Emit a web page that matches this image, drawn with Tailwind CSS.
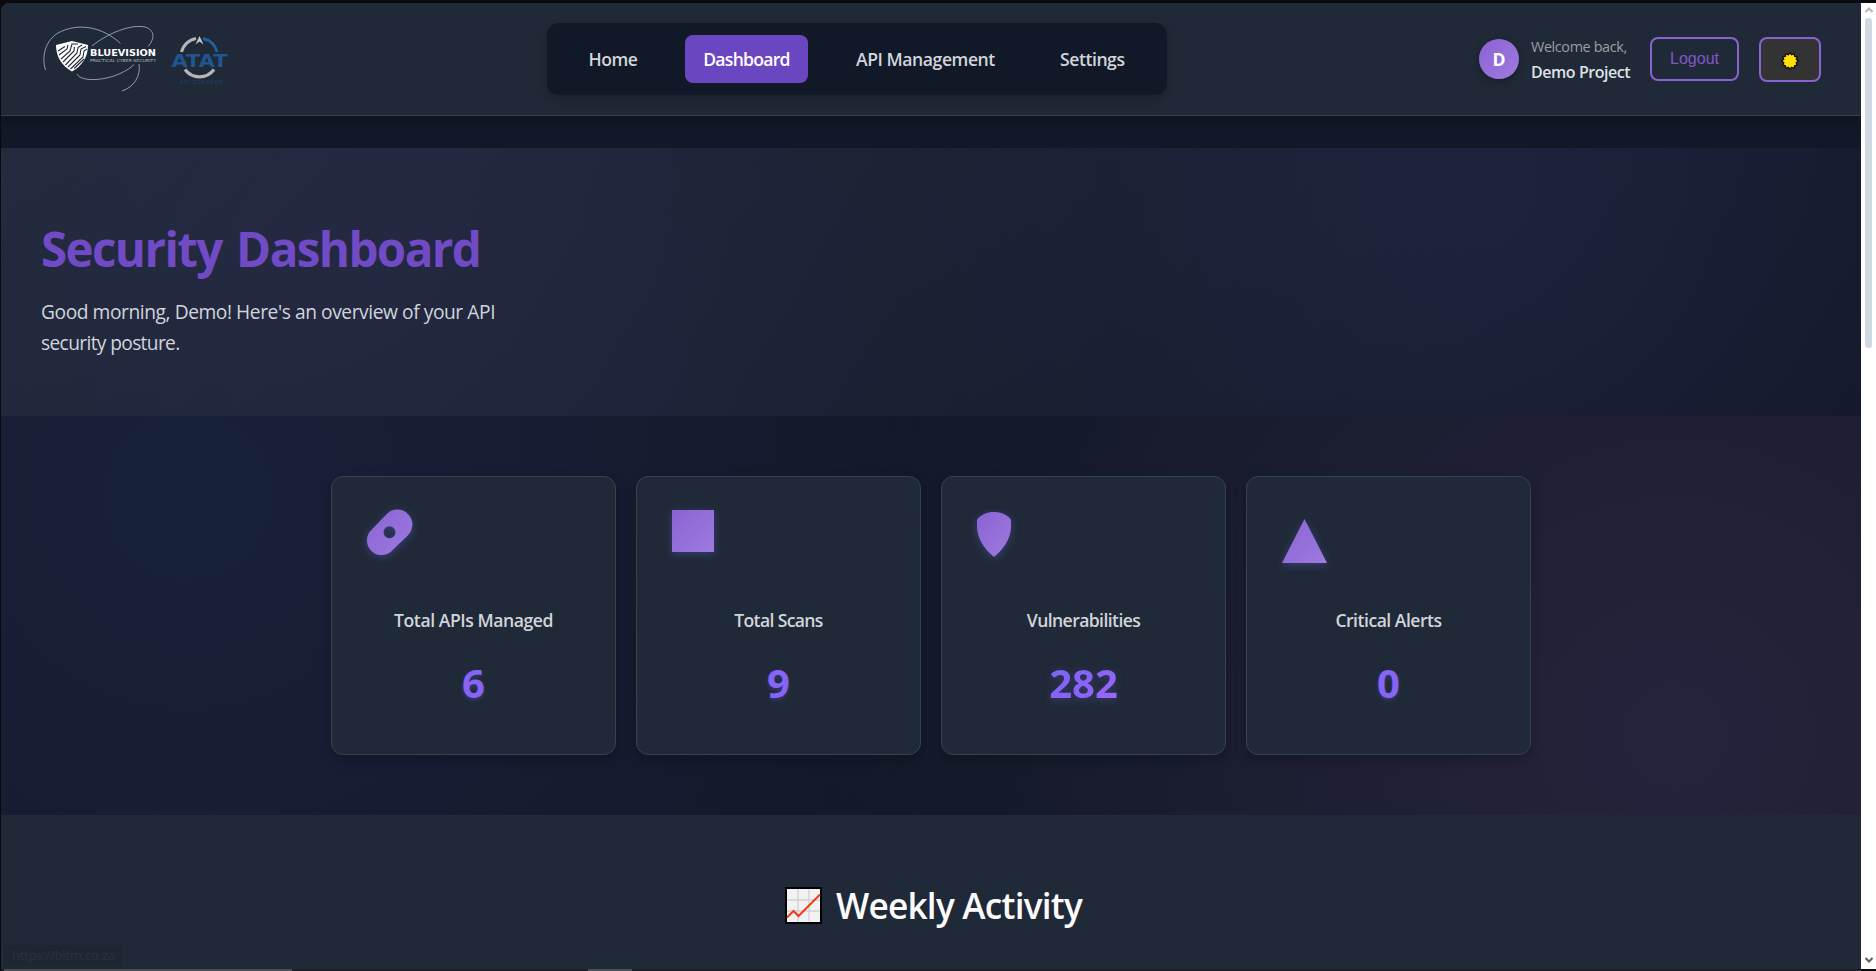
<!DOCTYPE html>
<html lang="en">
<head>
<meta charset="utf-8">
<title>Security Dashboard</title>
<script src="https://cdn.jsdelivr.net/npm/@tailwindcss/browser@4"></script>
</head>
<body class="h-[971px] w-[1876px] overflow-hidden bg-[#0a0a0c] font-['Open_Sans','Noto_Sans',sans-serif]">
<svg width="0" height="0" class="absolute"><defs>
  <linearGradient id="pg" x1="0" y1="0" x2="1" y2="1"><stop offset="0" stop-color="#8a63d2"/><stop offset="1" stop-color="#9f7ae0"/></linearGradient>
</defs></svg>
<div class="flex h-[971px] pt-[3px] pl-px">
  <div class="flex w-[1860px] flex-col overflow-hidden rounded-tl-lg bg-[#111827]">
    <!-- Header -->
    <header class="z-10 flex h-[113px] shrink-0 border-b border-[#374151] bg-[#202937] shadow-[0_4px_12px_rgba(0,0,0,0.25)]">
      <div class="flex w-[546px] pt-[18px] pl-[36px]">
        <svg width="200" height="80" viewBox="37 21 200 80" fill="none">
          <g stroke="#9aa8b8" stroke-width="0.9">
            <path d="M45.500 70C41 56 46 40 58 33C78 22 103 27 120.500 43.500"/>
            <path d="M92 46C108 33 131 24 145 27C155 30 155 39 148 46.500"/>
            <path d="M77 74C81 82 104 81 120 73.500C126 71 131 67.500 134 64.500"/>
            <path d="M139 64C141 76 134 87 122 91"/>
          </g>
          <path d="M56 45L72 41L88 45C88 57 82 66 72 71.500C62 66 56 57 56 45Z" fill="#fff"/>
          <g stroke="#202937" stroke-width="1.100">
            <path d="M58 51L65 46.500M59 55L67 49L68 45M61 59L70 51L72 44L78 44M63 62L74 51L74.500 47M65.500 65L77 53L78 47.500L82 45M68 67L80 55L81 49L86 46.500M70.500 69L83 57L84 51L87 49M74 68.500L84 59"/>
          </g>
          <text x="90" y="56" fill="#fff" font-family="DejaVu Sans, sans-serif" font-weight="700" font-size="9.200" textLength="66" lengthAdjust="spacingAndGlyphs">BLUEVISION</text>
          <text x="90" y="62" fill="#b4bcc6" font-family="DejaVu Sans, sans-serif" font-size="4" textLength="66" lengthAdjust="spacingAndGlyphs">PRACTICAL CYBER SECURITY</text>
          <path d="M181.500 52A18 18 0 0 1 196 38.500" stroke="#b4b7ba" stroke-width="3"/>
          <path d="M203 38.500A18 18 0 0 1 217 52" stroke="#20609f" stroke-width="3"/>
          <path d="M185 69.500A18 18 0 0 0 214 69.500" stroke="#b4b7ba" stroke-width="3.200"/>
          <path d="M199.500 36L203.500 44.500L199.500 41.500L195.500 44.500Z" fill="#c4c6c8"/>
          <text x="171.500" y="67.300" fill="#1f568f" font-family="DejaVu Sans, sans-serif" font-weight="700" font-size="18.500" textLength="56" lengthAdjust="spacingAndGlyphs">ATAT</text>
          <text x="180" y="84" fill="#1b436f" font-family="Liberation Sans, sans-serif" font-size="4.600" textLength="42">API SCANNER</text>
        </svg>
      </div>
      <nav class="mt-5 flex h-[72px] w-[620px] items-center rounded-xl bg-[#111827] text-[17.6px] font-semibold text-[#d1d5db] shadow-[0_4px_12px_rgba(0,0,0,0.2)]">
        <a class="ml-[41.5px] w-[96.5px] tracking-[-0.5px]">Home</a>
        <a class="flex h-12 w-[123px] items-center justify-center rounded-lg bg-[#6b46c1] tracking-[-0.75px] text-white">Dashboard</a>
        <a class="ml-[48px] w-[204px] tracking-[-0.45px] whitespace-nowrap">API Management</a>
        <a class="tracking-[-0.45px]">Settings</a>
      </nav>
      <div class="ml-[312px] flex">
        <div class="mt-9 flex size-10 items-center justify-center rounded-full bg-linear-135 from-[#8a63d2] to-[#9f7ae0] text-[17.6px] font-bold text-white shadow-[0_2px_8px_rgba(0,0,0,0.3)]">D</div>
        <div class="mt-[32px] ml-3 w-[119px] whitespace-nowrap">
          <div class="h-[25px] text-[14.4px] leading-[24px] tracking-[-0.38px] text-[#9b9ea3]">Welcome back,</div>
          <div class="text-base leading-[24px] font-semibold tracking-[-0.45px] text-[#dfe1e4]">Demo Project</div>
        </div>
        <button class="mt-[34px] h-11 w-[89px] rounded-lg border-2 border-[#8a63d2] font-['Liberation_Sans',sans-serif] text-base text-[#8058c8]">Logout</button>
        <button class="mt-[34px] ml-5 flex h-[45px] w-[62px] items-center justify-center rounded-lg border-2 border-[#8a63d2] bg-[#333]">
          <svg class="mt-0.5" width="20" height="20" viewBox="-9.500 -9.500 19 19"><path fill="#ffe000" stroke="#0b0b0b" stroke-width="1.200" stroke-linejoin="round" d="M0 -8L1.600 -5.900L4 -6.900L4.400 -4.400L6.900 -4L5.900 -1.600L8 0L5.900 1.600L6.900 4L4.400 4.400L4 6.900L1.600 5.900L0 8L-1.600 5.900L-4 6.900L-4.400 4.400L-6.900 4L-5.900 1.600L-8 0L-5.900 -1.600L-6.900 -4L-4.400 -4.400L-4 -6.900L-1.600 -5.900Z"/></svg>
        </button>
      </div>
    </header>
    <!-- Hero -->
    <section class="mt-8 h-[268px] shrink-0 bg-[radial-gradient(circle_at_20%_50%,rgba(107,70,193,0.1),transparent_50%),radial-gradient(circle_at_80%_20%,rgba(107,70,193,0.12),transparent_40%),linear-gradient(135deg,#1f2937_0%,#111827_100%)] pt-[67px] pl-10">
      <h1 class="text-[47.5px] leading-[68px] font-bold tracking-[-1.6px] [word-spacing:3.6px] whitespace-nowrap text-[#704bc5]">Security Dashboard</h1>
      <p class="mt-[14px] text-[19.2px] leading-[30.7px] tracking-[-0.43px] whitespace-nowrap text-[#d1d5db]">Good morning, Demo! Here's an overview of your API<br><span class="tracking-[-0.65px]">security posture.</span></p>
    </section>
    <!-- Statistics -->
    <section class="flex h-[399px] shrink-0 justify-center gap-5 bg-[#111827] bg-[radial-gradient(circle_at_10%_20%,rgba(90,115,235,0.1),transparent_50%),radial-gradient(circle_at_90%_80%,rgba(159,100,180,0.15),transparent_50%)] pt-[60px]">
      <div class="flex h-[279px] w-[285px] flex-col items-center rounded-xl border border-[#374151] bg-[#202937] pt-8 shadow-[0_4px_12px_rgba(0,0,0,0.25)]">
        <svg class="ml-[34px] self-start overflow-visible drop-shadow-[0_2px_4px_rgba(99,102,241,0.35)]" width="52" height="64"><path fill="url(#pg)" fill-rule="evenodd" d="M20.800 5A13.800 13.800 0 0 1 42 26.200L25.400 42.300A13.800 13.800 0 0 1 5.800 20.500ZM23.500 17.200A6 6 0 1 0 23.500 29.200A6 6 0 1 0 23.500 17.200Z"/></svg>
        <h3 class="mt-[33px] text-[17.6px] leading-7 font-semibold tracking-[-0.45px] text-[#d1d5db]">Total APIs Managed</h3>
        <div class="mt-[17px] text-[40px] leading-[64px] font-bold text-[#8763f6] text-shadow-[0_2px_4px_rgba(99,102,241,0.3)]">6</div>
      </div>
      <div class="flex h-[279px] w-[285px] flex-col items-center rounded-xl border border-[#374151] bg-[#202937] pt-8 shadow-[0_4px_12px_rgba(0,0,0,0.25)]">
        <svg class="ml-8 self-start overflow-visible drop-shadow-[0_2px_4px_rgba(99,102,241,0.35)]" width="52" height="64"><path fill="url(#pg)" d="M3 1H45V43H3Z"/></svg>
        <h3 class="mt-[33px] text-[17.6px] leading-7 font-semibold tracking-[-0.65px] text-[#d1d5db]">Total Scans</h3>
        <div class="mt-[17px] text-[40px] leading-[64px] font-bold text-[#8763f6] text-shadow-[0_2px_4px_rgba(99,102,241,0.3)]">9</div>
      </div>
      <div class="flex h-[279px] w-[285px] flex-col items-center rounded-xl border border-[#374151] bg-[#202937] pt-8 shadow-[0_4px_12px_rgba(0,0,0,0.25)]">
        <svg class="ml-8 self-start overflow-visible drop-shadow-[0_2px_4px_rgba(99,102,241,0.35)]" width="52" height="64"><path fill="url(#pg)" d="M3 10.500C7 5.500 13 3 20 3S33 5.500 37 10.500V17C37 29 30 40 20 48C10 40 3 29 3 17Z"/></svg>
        <h3 class="mt-[33px] text-[17.6px] leading-7 font-semibold tracking-[-0.6px] text-[#d1d5db]">Vulnerabilities</h3>
        <div class="mt-[17px] bg-linear-135 from-[#7a66f0] from-10% via-[#8763f6] via-50% to-[#a566f7] bg-clip-text text-[40px] leading-[64px] font-bold text-transparent drop-shadow-[0_2px_4px_rgba(99,102,241,0.3)]">282</div>
      </div>
      <div class="flex h-[279px] w-[285px] flex-col items-center rounded-xl border border-[#374151] bg-[#202937] pt-8 shadow-[0_4px_12px_rgba(0,0,0,0.25)]">
        <svg class="ml-8 self-start overflow-visible drop-shadow-[0_2px_4px_rgba(99,102,241,0.35)]" width="52" height="64"><path fill="url(#pg)" d="M25.500 10L48 54H3Z"/></svg>
        <h3 class="mt-[33px] text-[17.6px] leading-7 font-semibold tracking-[-0.5px] text-[#d1d5db]">Critical Alerts</h3>
        <div class="mt-[17px] text-[40px] leading-[64px] font-bold text-[#8763f6] text-shadow-[0_2px_4px_rgba(99,102,241,0.3)]">0</div>
      </div>
    </section>
    <!-- Weekly activity -->
    <section class="flex h-[154px] shrink-0 justify-center bg-[#202937] pt-[60px] pl-[5px]">
      <h2 class="flex h-[60px] items-center text-[35.2px] font-semibold tracking-[-0.77px] whitespace-nowrap text-[#fbfbfc]">
        <svg class="mr-[14px]" width="37" height="37" viewBox="0 0 37 37"><path fill="#000" d="M0 0H37V37H0Z"/><path fill="#f2f2f2" d="M2 2H35V35H2Z"/><path stroke="#d2d2d2" stroke-width="1.300" d="M13 2V35M24 2V35M2 13H35M2 24H35"/><path fill="none" stroke="#f03a17" stroke-width="2" d="M2 30.500L8.500 24L13.500 29L35 7.500"/></svg>
        Weekly Activity</h2>
    </section>
    <div class="flex h-0.5 shrink-0 bg-[#1c2127] pl-[3px]">
      <div class="h-0.5 w-[288px] bg-[#4b4f54]"></div>
      <div class="ml-[296px] h-0.5 w-[44px] bg-[#4b5159]"></div>
    </div>
  </div>
  <!-- Scrollbar -->
  <div class="flex h-[966px] w-[15px] flex-col items-center bg-white pt-1">
    <svg width="8" height="6" viewBox="0 0 8 6" fill="none"><path d="M0.500 5L4 1.500L7.500 5" stroke="#b5b5b5" stroke-width="2"/></svg>
    <div class="mt-[5px] h-[330px] w-[7px] rounded-[3px] bg-[#d0dae3]"></div>
    <svg class="mt-[609px]" width="8" height="6" viewBox="0 0 8 6" fill="none"><path d="M0.500 1L4 4.500L7.500 1" stroke="#606060" stroke-width="2"/></svg>
  </div>
</div>
<!-- Link status bubble -->
<div class="absolute top-[945px] left-1 z-20 flex h-[22px] w-[119px] items-center bg-[#1e2633] pl-2 font-['Open_Sans',sans-serif] text-[13px] tracking-[-0.2px] text-[#283347]">https://bitm.co.za</div>
</body>
</html>
